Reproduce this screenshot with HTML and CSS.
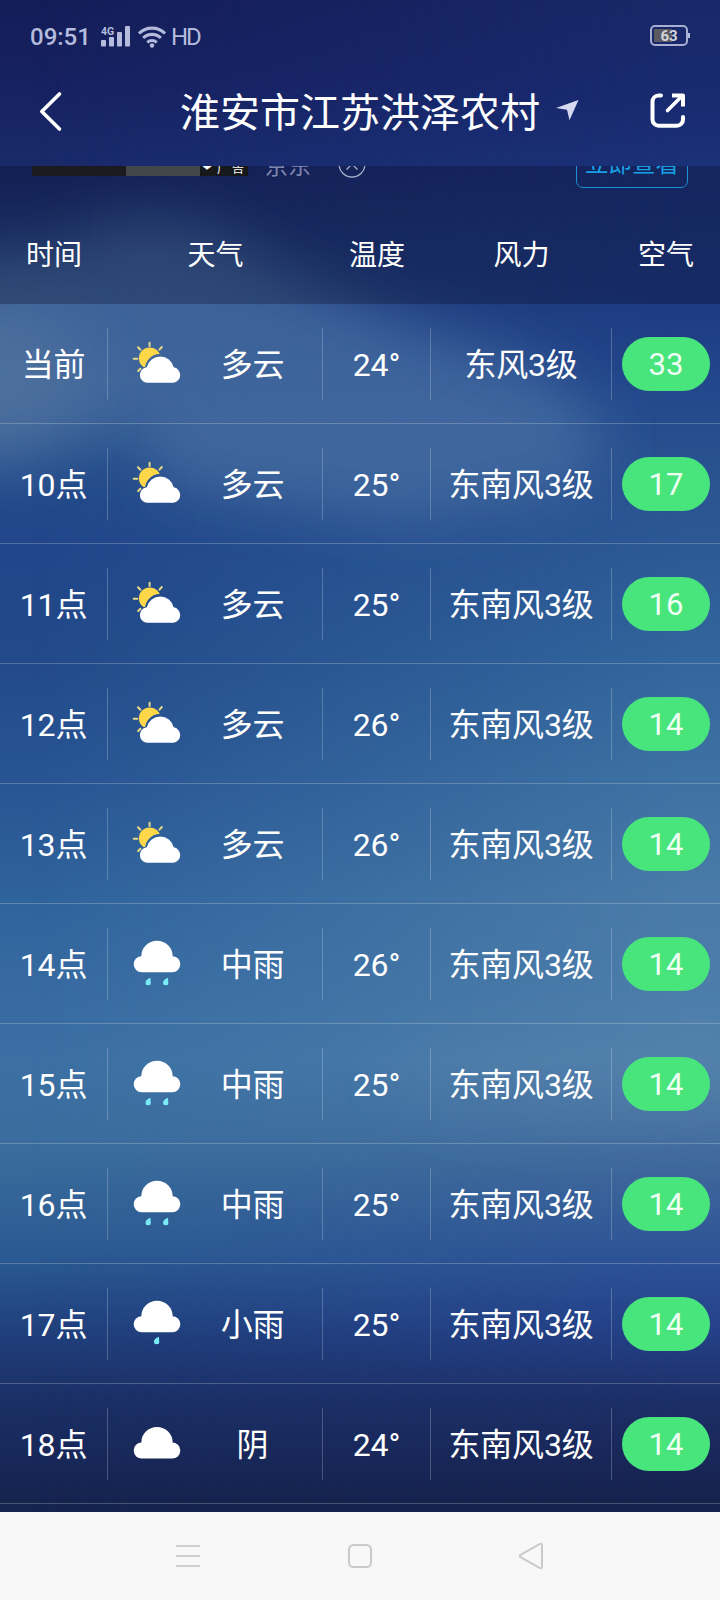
FILE: index.html
```html
<!DOCTYPE html>
<html lang="zh-CN">
<head>
<meta charset="utf-8">
<title>淮安市江苏洪泽农村</title>
<link rel="stylesheet" href="styles.css">
</head>
<body>
<svg class="defs" width="0" height="0" aria-hidden="true">
  <defs>
    <mask id="sun-mask" maskUnits="userSpaceOnUse" x="0" y="0" width="64" height="64">
      <rect width="64" height="64" fill="#fff"/>
      <g fill="#000" stroke="#000" stroke-width="2.2"><rect x="14" y="35.5" width="42.3" height="15.2" rx="7.6"/><circle cx="34.9" cy="37" r="13.8"/></g>
    </mask>
    <symbol id="cloudy" viewBox="0 0 64 64">
      <circle cx="24.7" cy="26.2" r="10.8" fill="#ffd84a" mask="url(#sun-mask)"/>
      <path d="M24.6 10.800v3.200M13 15.200l2.400 2.600M8.700 26.800h3.600M34.500 17.600l2.300-2.600M13.200 39l2.200-2.300" stroke="#e6da86" stroke-width="2" stroke-linecap="round"/>
      <path d="M21.800 35.200a13.700 13.700 0 0 1 26.800 0.100a7.800 7.800 0 0 1 0.100 15.400H21.800a7.800 7.800 0 0 1 0-15.500z" fill="#fff"/>
    </symbol>
    <symbol id="cloud" viewBox="0 0 64 64">
      <rect x="8.700" y="24.200" width="46.600" height="16.100" rx="8" fill="#fff"/>
      <path d="M16.300 27v-2.600a15.700 15.700 0 0 1 31.400 0V27z" fill="#fff"/>
    </symbol>
    <symbol id="drop" viewBox="0 0 6 8">
      <path d="M5.400 0.200C3 0.900 0.300 2.900 0.300 5.100A2.600 2.600 0 0 0 2.900 7.700A2.600 2.600 0 0 0 5.600 5.100C5.600 3.200 5.100 1.800 5.400 0.200z" fill="#78ebf7"/>
    </symbol>
    <symbol id="rain-mid" viewBox="0 0 64 64">
      <use href="#cloud" width="64" height="64"/>
      <use href="#drop" x="20.200" y="45.600" width="6" height="8"/>
      <use href="#drop" x="37.800" y="45.600" width="6" height="8"/>
    </symbol>
    <symbol id="rain-small" viewBox="0 0 64 64">
      <use href="#cloud" width="64" height="64"/>
      <use href="#drop" x="28.700" y="44.600" width="6" height="8"/>
    </symbol>
    <symbol id="overcast" viewBox="0 0 64 64">
      <use href="#cloud" y="6.300" width="64" height="64"/>
    </symbol>
  </defs>
</svg>
<div class="screen">
  <div class="sky">
    <div class="sky-right"></div>
    <svg class="sky-clouds" viewBox="0 0 720 1512" width="720" height="1512">
      <defs>
        <filter id="b1" x="-50%" y="-50%" width="200%" height="200%"><feGaussianBlur stdDeviation="28"/></filter>
        <filter id="b2" x="-50%" y="-50%" width="200%" height="200%"><feGaussianBlur stdDeviation="34"/></filter>
      </defs>
      <path d="M-80 260L60 245L130 215L210 225L300 280L420 330L540 370L610 430L570 490L400 520L180 490L130 430L60 450L-80 480z" fill="#4f78a8" fill-opacity=".58" filter="url(#b1)"/>
      <ellipse cx="0" cy="375" rx="90" ry="65" fill="#6480a0" fill-opacity=".38" filter="url(#b2)"/>
      <ellipse cx="600" cy="1080" rx="220" ry="50" fill="#6a90b0" fill-opacity=".15" filter="url(#b1)"/>
    </svg>
  </div>

  <header>
    <div class="status">
      <span class="clock">09:51</span>
      <svg class="signal" width="30" height="22" viewBox="0 0 30 22"><g fill="#b4bbdc"><text x="0" y="8.500" class="net">4G</text><rect x="0" y="14" width="5" height="6.500" rx="1"/><rect x="8" y="11" width="5" height="9.500" rx="1"/><rect x="16" y="6" width="5" height="14.500" rx="1"/><rect x="24" y="0" width="5" height="20.500" rx="1"/></g></svg>
      <svg class="wifi" width="28" height="22" viewBox="0 0 28 22"><g fill="none" stroke="#b4bbdc" stroke-width="3.100"><path d="M1 7.500a18.500 18.500 0 0 1 26 0"/><path d="M5.200 12a12.500 12.500 0 0 1 17.600 0"/><path d="M9.300 16.500a6.700 6.700 0 0 1 9.400 0"/></g><circle cx="14" cy="19.500" r="2.200" fill="#b4bbdc"/></svg>
      <span class="hd">HD</span>
      <div class="battery"><span>63</span></div>
    </div>
    <div class="titlebar">
      <svg class="back" width="26" height="42" viewBox="0 0 26 42"><path d="M22.500 3L4.800 20.500L22.500 38" fill="none" stroke="#fff" stroke-width="3.600" stroke-linecap="round" stroke-linejoin="round"/></svg>
      <h1>淮安市江苏洪泽农村</h1>
      <svg class="locate" width="24" height="22" viewBox="0 0 24 22"><path d="M23.500 1L1 9L12 10.800L14.500 21.200z" fill="#d5daf0"/></svg>
      <svg class="share" width="36" height="36" viewBox="0 0 36 36"><g fill="none" stroke="#fff" stroke-width="4" stroke-linecap="round"><path d="M11 2.600H8.500A6.200 6.200 0 0 0 2.500 8.800V26.500a6.200 6.200 0 0 0 6.200 6.200H26.800a6.200 6.200 0 0 0 6.200-6.200V24"/><path d="M17.500 17.500L31 4" stroke-width="3.600"/><path d="M22 2.400H33V13.500" stroke-linecap="butt" stroke-linejoin="round"/></g></svg>
    </div>
  </header>

  <section class="subhead">
    <div class="ad-clip">
      <div class="ad">
        <div class="ad-image"><i></i><b>❤</b><em>广告</em></div>
        <span class="ad-name">京东</span>
        <svg class="ad-close" width="28" height="28" viewBox="0 0 28 28"><g fill="none" stroke="#a9b0cf" stroke-width="1.300"><circle cx="14" cy="13" r="13"/><path d="M8.500 18.500L19.500 7.500M19.500 18.500L8.500 7.500"/></g></svg>
        <span class="ad-button">立即查看</span>
      </div>
    </div>
    <div class="grid heads"><span>时间</span><span>天气</span><span>温度</span><span>风力</span><span>空气</span></div>
  </section>

  <main>
    <div class="grid row"><span><i>当前</i></span><span class="weather"><svg><use href="#cloudy"/></svg><i>多云</i></span><span><i>24°</i></span><span><i>东风3级</i></span><span><b class="aqi">33</b></span></div>
    <div class="grid row"><span><i>10点</i></span><span class="weather"><svg><use href="#cloudy"/></svg><i>多云</i></span><span><i>25°</i></span><span><i>东南风3级</i></span><span><b class="aqi">17</b></span></div>
    <div class="grid row"><span><i>11点</i></span><span class="weather"><svg><use href="#cloudy"/></svg><i>多云</i></span><span><i>25°</i></span><span><i>东南风3级</i></span><span><b class="aqi">16</b></span></div>
    <div class="grid row"><span><i>12点</i></span><span class="weather"><svg><use href="#cloudy"/></svg><i>多云</i></span><span><i>26°</i></span><span><i>东南风3级</i></span><span><b class="aqi">14</b></span></div>
    <div class="grid row"><span><i>13点</i></span><span class="weather"><svg><use href="#cloudy"/></svg><i>多云</i></span><span><i>26°</i></span><span><i>东南风3级</i></span><span><b class="aqi">14</b></span></div>
    <div class="grid row"><span><i>14点</i></span><span class="weather"><svg><use href="#rain-mid"/></svg><i>中雨</i></span><span><i>26°</i></span><span><i>东南风3级</i></span><span><b class="aqi">14</b></span></div>
    <div class="grid row"><span><i>15点</i></span><span class="weather"><svg><use href="#rain-mid"/></svg><i>中雨</i></span><span><i>25°</i></span><span><i>东南风3级</i></span><span><b class="aqi">14</b></span></div>
    <div class="grid row"><span><i>16点</i></span><span class="weather"><svg><use href="#rain-mid"/></svg><i>中雨</i></span><span><i>25°</i></span><span><i>东南风3级</i></span><span><b class="aqi">14</b></span></div>
    <div class="grid row"><span><i>17点</i></span><span class="weather"><svg><use href="#rain-small"/></svg><i>小雨</i></span><span><i>25°</i></span><span><i>东南风3级</i></span><span><b class="aqi">14</b></span></div>
    <div class="grid row"><span><i>18点</i></span><span class="weather"><svg><use href="#overcast"/></svg><i>阴</i></span><span><i>24°</i></span><span><i>东南风3级</i></span><span><b class="aqi">14</b></span></div>
  </main>

  <nav>
    <svg width="26" height="28" viewBox="0 0 26 28"><path d="M1 4h24M1 14h24M1 24h24" stroke="#d0d0d0" stroke-width="2"/></svg>
    <svg width="26" height="28" viewBox="0 0 26 28"><rect x="2" y="3" width="22" height="22" rx="4.500" fill="none" stroke="#cacaca" stroke-width="2"/></svg>
    <svg width="26" height="28" viewBox="0 0 26 28"><path d="M1.500 12.800L20.500 2.200Q23 1 23 3.500V24.500Q23 27 20.500 25.800L1.500 15.200Q0 14 1.500 12.800z" fill="none" stroke="#cacaca" stroke-width="2" stroke-linejoin="round"/></svg>
  </nav>
</div>
</body>
</html>
```

FILE: styles.css
```css
* { box-sizing: border-box; }
body { margin: 0; }
.defs { position: absolute; }
.screen {
  position: relative;
  width: 720px;
  height: 1600px;
  overflow: hidden;
  display: flex;
  flex-direction: column;
  color: #fff;
  font-family: Roboto, "Noto Sans CJK SC", sans-serif;
}
.sky {
  position: absolute;
  inset: 0 0 88px;
  z-index: -1;
  overflow: hidden;
  background: linear-gradient(#141d58 0, #162160 80px, #192a6a 166px, #1d3474 220px, #244684 320px, #264e8a 440px, #21468a 540px, #224989 650px, #285493 780px, #2f639c 900px, #3c70a4 1060px, #3a6d9d 1150px, #2a5890 1260px, #20407c 1330px, #1b2f66 1400px, #15234f 1500px);
}
.sky-right {
  position: absolute;
  inset: 0;
  background: linear-gradient(#182868 0, #192a70 100px, #1b3178 166px, #1d3a80 300px, #22458a 370px, #28508f 450px, #2c5894 540px, #32659c 650px, #3e72a3 780px, #4a7ba8 900px, #4e7fab 1060px, #40699c 1160px, #2d5296 1260px, #25428a 1325px, #1d2f68 1400px, #16224e 1500px);
  -webkit-mask-image: linear-gradient(90deg, transparent 5%, #000 95%);
  mask-image: linear-gradient(90deg, transparent 5%, #000 95%);
}
.sky-clouds { position: absolute; inset: 0; }

.status {
  display: flex;
  align-items: center;
  height: 72px;
  padding: 2px 30px 0;
  color: #b4bbdc;
  font-size: 24px;
  line-height: 28px;
}
.clock { width: 71px; font-weight: 500; }
.net { font: bold 10.5px Roboto, sans-serif; }
.signal { margin-right: 7px; }
.wifi { margin-right: 5px; }
.hd { letter-spacing: -2px; }
.battery {
  position: relative;
  width: 38px;
  height: 21px;
  margin: -3px 2px 0 auto;
  padding: 2px;
  border: 2px solid #a7aed2;
  border-radius: 5px;
}
.battery::after {
  content: "";
  position: absolute;
  right: -4px;
  top: 6px;
  width: 2px;
  height: 5px;
  background: #b4bbdc;
}
.battery span {
  display: block;
  height: 13px;
  background: linear-gradient(90deg, #5a5a60 60%, transparent 60%);
  color: #d4d4dc;
  font: bold 15px/14px Roboto, sans-serif;
  text-align: center;
}
.titlebar { display: flex; align-items: center; height: 94px; padding: 0 34px 14px 38px; }
.back { width: 26px; margin: -1px 117px 0 -1px; }
h1 { margin: 3px 0 0; font-size: 40px; font-weight: 400; line-height: 60px; white-space: nowrap; }
.locate { margin: -4px 0 0 15px; }
.share { margin: -2px 0 0 auto; }

.subhead { height: 138px; background: rgba(8, 8, 30, .28); }
.ad-clip { height: 34px; overflow: hidden; }
.ad { display: flex; align-items: center; height: 46px; margin-top: -24px; padding: 0 32px; }
.ad-image {
  display: flex;
  align-items: flex-end;
  align-self: flex-start;
  width: 216px;
  height: 34px;
  background: linear-gradient(90deg, #1c1c20 94px, #45464a 94px, #45464a 168px, #17181a 168px);
}
.ad-image i { width: 170px; }
.ad-image b, .ad-image em { font: normal 12px/13px "DejaVu Sans", "Noto Sans CJK SC", sans-serif; }
.ad-image b { width: 15px; margin-bottom: 2px; }
.ad-image em { letter-spacing: 3px; white-space: nowrap; }
.ad-name { margin: -3px 0 0 17px; width: 73px; color: #8087ad; font-size: 23px; }
.ad-button {
  width: 112px;
  height: 46px;
  margin-left: auto;
  border: 1.5px solid #1f8fd4;
  border-radius: 7px;
  color: #17a0e6;
  font-size: 23.5px;
  line-height: 43px;
  text-align: center;
}

.grid { display: grid; grid-template-columns: 108px 215px 108px 181px 108px; }
.heads { height: 104px; padding-top: 2px; align-items: center; font-size: 28px; text-align: center; }
.row {
  height: 120px;
  padding: 24px 0 23px;
  border-bottom: 1px solid rgba(255, 255, 255, .22);
  font-size: 32px;
  line-height: 46px;
}
.row > span {
  display: flex;
  align-items: center;
  justify-content: center;
  height: 72px;
  border-right: 1px solid rgba(255, 255, 255, .22);
}
.row > span:last-child { border: 0; }
.row i { padding-top: 2px; font-style: normal; letter-spacing: -.2px; }
.row > .weather { justify-content: flex-start; padding-left: 17px; }
.weather svg { width: 64px; height: 64px; flex: none; }
.weather i { width: 127px; text-align: center; }
.aqi {
  width: 88px;
  height: 54px;
  border-radius: 27px;
  background: #48e57c;
  color: #effff4;
  font-size: 31px;
  font-weight: 400;
  line-height: 56px;
  text-align: center;
}
nav {
  display: flex;
  align-items: center;
  justify-content: center;
  gap: 146px;
  height: 88px;
  margin-top: auto;
  background: #f8f8f8;
}
```
